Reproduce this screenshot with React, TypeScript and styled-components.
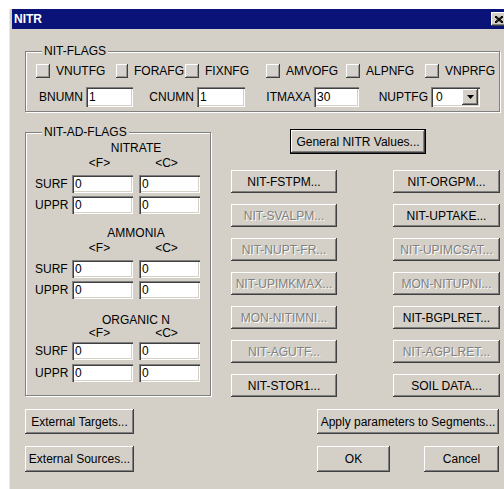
import React from 'react';
import styled, { createGlobalStyle } from 'styled-components';

const GlobalStyle = createGlobalStyle`
  html, body {
    margin: 0;
    padding: 0;
    background: #fff;
    overflow: hidden;
  }
  body {
    font-family: "Liberation Sans", Arial, sans-serif;
    font-size: 12px;
    color: #000;
  }
`;

const Screen = styled.div`
  width: 504px;
  height: 489px;
  padding: 9px 0 0 9px;
  box-sizing: border-box;
  overflow: hidden;
`;

const Window = styled.div`
  width: 503px;
  min-height: 480px;
  box-sizing: border-box;
  background: #d4d0c8;
  border-left: 1px solid #ecebe7;
  padding-left: 2px;
`;

const TitleBar = styled.div`
  height: 20px;
  display: flex;
  align-items: center;
  justify-content: space-between;
  padding: 0 5px 0 2px;
  background: #0a1478;
`;

const Title = styled.span`
  color: #fff;
  font-weight: bold;
  font-size: 12px;
  line-height: 14px;
`;

const CloseButton = styled.button`
  width: 16px;
  height: 14px;
  padding: 0;
  border: none;
  display: flex;
  align-items: center;
  justify-content: center;
  background: #d4d0c8;
  box-shadow: inset -1px -1px #404040, inset 1px 1px #fff, inset -2px -2px #808080;
`;

const Body = styled.div`
  width: 475px;
  padding: 15px 0 0 13px;
`;

const Group = styled.fieldset<{ $width?: number }>`
  margin: 0;
  min-width: 0;
  box-sizing: border-box;
  width: ${p => (p.$width ? `${p.$width}px` : 'auto')};
  border: 1px solid #808080;
  box-shadow: inset 1px 1px #fff, 1px 1px #fff;
`;

const FlagsGroup = styled(Group)`
  padding: 6px 0 4px 9px;
`;

const AdGroup = styled(Group)`
  padding: 2px 0 13px 9px;
`;

const GroupLabel = styled.legend`
  margin-left: 7px;
  padding: 0 2px;
  line-height: 14px;
  font-size: 12px;
  background: #d4d0c8;
`;

const CheckRow = styled.div`
  display: grid;
  grid-template-columns: 80px 69px 81px 80px 79px auto;
  height: 14px;
`;

const CheckItem = styled.label`
  display: flex;
  align-items: center;
  gap: 6px;
  line-height: 14px;
`;

const CheckBox = styled.span`
  width: 14px;
  height: 14px;
  margin-left: 1px;
  box-sizing: border-box;
  background: #d6d3ce;
  box-shadow: inset -1px -1px #404040, inset 1px 1px #fff, inset -2px -2px #9a9893;
`;

const FieldRow = styled.div`
  display: grid;
  grid-template-columns: 98px 112px 114px 121px;
  margin-top: 9px;
  height: 20px;
`;

const Field = styled.label`
  display: flex;
  align-items: center;
  justify-content: flex-end;
  gap: 3px;
`;

const TextBox = styled.input<{ $w: number; $h?: number }>`
  width: ${p => p.$w}px;
  height: ${p => p.$h ?? 18}px;
  box-sizing: border-box;
  margin: 0;
  padding: 0 3px;
  border: none;
  outline: none;
  background: #fff;
  font: 12px "Liberation Sans", Arial, sans-serif;
  color: #000;
  box-shadow: inset 1px 1px #808080, inset 2px 2px #404040, inset -1px -1px #fff, inset -2px -2px #d4d0c8;
`;

const ComboBox = styled.div`
  width: 49px;
  height: 20px;
  box-sizing: border-box;
  display: flex;
  align-items: center;
  justify-content: space-between;
  padding: 2px 2px 2px 5px;
  background: #fff;
  box-shadow: inset 1px 1px #808080, inset 2px 2px #404040, inset -1px -1px #fff, inset -2px -2px #d4d0c8;
`;

const ComboArrow = styled.span`
  width: 16px;
  height: 16px;
  display: flex;
  align-items: center;
  justify-content: center;
  background: #d4d0c8;
  box-shadow: inset -1px -1px #404040, inset 1px 1px #fff, inset -2px -2px #808080;
`;

const MidRow = styled.div`
  display: flex;
  align-items: flex-start;
  gap: 20px;
  margin-top: 13px;
`;

// the last block sits its heading closer to the <F>/<C> captions
const Section = styled.div<{ $tight?: boolean }>`
  display: grid;
  grid-template-columns: 31px 61px 61px;
  grid-template-rows: ${p => (p.$tight ? '12px 16px 22px 18px' : '15px 19px 21px 18px')};
  column-gap: 6px;
  margin-top: ${p => (p.$tight ? 15 : 12)}px;
  &:first-of-type {
    margin-top: 0;
  }
`;

const SectionTitle = styled.div<{ $tight?: boolean }>`
  grid-column: 2 / 4;
  text-align: center;
  line-height: ${p => (p.$tight ? 12 : 14)}px;
`;

const SubTitle = styled.div`
  text-align: center;
  line-height: 14px;
  padding-right: 6px;
`;

const RowLabel = styled.div`
  grid-column: 1;
  line-height: 18px;
`;

const RightPanel = styled.div`
  width: 269px;
  padding-top: 4px;
`;

const Button = styled.button<{ $w?: number; $h?: number; $default?: boolean }>`
  width: ${p => (p.$w ? `${p.$w}px` : '100%')};
  height: ${p => p.$h ?? 23}px;
  box-sizing: border-box;
  margin: 0;
  padding: 0 2px;
  white-space: nowrap;
  overflow: hidden;
  font: 12px "Liberation Sans", Arial, sans-serif;
  color: #000;
  background: #d4d0c8;
  border: ${p => (p.$default ? '1px solid #000' : 'none')};
  box-shadow: inset -1px -1px #404040, inset 1px 1px #fff, inset -2px -2px #808080;
  &:disabled {
    color: #808080;
    text-shadow: 1px 1px 0 #fff;
  }
`;

const GeneralWrap = styled.div`
  padding-left: 59px;
`;

const ButtonGrid = styled.div`
  display: grid;
  grid-template-columns: 106px 107px;
  grid-auto-rows: 23px;
  justify-content: space-between;
  row-gap: 11px;
  margin-top: 16px;
`;

const BottomRow = styled.div`
  display: flex;
  justify-content: space-between;
  margin-top: 12px;
  padding-right: 1px;
`;

const ButtonColumn = styled.div<{ $w: number }>`
  width: ${p => p.$w}px;
  display: flex;
  flex-direction: column;
  gap: 12px;
`;

const DialogActions = styled.div`
  display: flex;
  justify-content: space-between;
`;

type NitButton = { label: string; enabled: boolean };

const gridButtons: NitButton[][] = [
  [{ label: 'NIT-FSTPM...', enabled: true }, { label: 'NIT-ORGPM...', enabled: true }],
  [{ label: 'NIT-SVALPM...', enabled: false }, { label: 'NIT-UPTAKE...', enabled: true }],
  [{ label: 'NIT-NUPT-FR...', enabled: false }, { label: 'NIT-UPIMCSAT...', enabled: false }],
  [{ label: 'NIT-UPIMKMAX...', enabled: false }, { label: 'MON-NITUPNI...', enabled: false }],
  [{ label: 'MON-NITIMNI...', enabled: false }, { label: 'NIT-BGPLRET...', enabled: true }],
  [{ label: 'NIT-AGUTF...', enabled: false }, { label: 'NIT-AGPLRET...', enabled: false }],
  [{ label: 'NIT-STOR1...', enabled: true }, { label: 'SOIL DATA...', enabled: true }],
];

const flags = ['VNUTFG', 'FORAFG', 'FIXNFG', 'AMVOFG', 'ALPNFG', 'VNPRFG'];
const species = ['NITRATE', 'AMMONIA', 'ORGANIC N'];

function App(): JSX.Element {
  return (
    <Screen>
      <GlobalStyle />
      <Window>
        <TitleBar>
          <Title>NITR</Title>
          <CloseButton>
            <svg width="8" height="7" viewBox="0 0 8 7">
              <path d="M0 0 L8 7 M1 0 L8 6 M0 1 L7 7 M8 0 L0 7 M7 0 L0 6 M8 1 L1 7" stroke="#000" strokeWidth="1" />
            </svg>
          </CloseButton>
        </TitleBar>
        <Body>
          <FlagsGroup>
            <GroupLabel>NIT-FLAGS</GroupLabel>
            <CheckRow>
              {flags.map(f => (
                <CheckItem key={f}>
                  <CheckBox />
                  {f}
                </CheckItem>
              ))}
            </CheckRow>
            <FieldRow>
              <Field>
                BNUMN <TextBox $w={47} $h={20} defaultValue="1" />
              </Field>
              <Field>
                CNUMN <TextBox $w={48} $h={20} defaultValue="1" />
              </Field>
              <Field>
                ITMAXA <TextBox $w={45} $h={20} defaultValue="30" />
              </Field>
              <Field>
                NUPTFG
                <ComboBox>
                  0
                  <ComboArrow>
                    <svg width="7" height="4" viewBox="0 0 7 4">
                      <path d="M0 0 H7 L3.5 4 Z" fill="#000" />
                    </svg>
                  </ComboArrow>
                </ComboBox>
              </Field>
            </FieldRow>
          </FlagsGroup>

          <MidRow>
            <AdGroup $width={186}>
              <GroupLabel>NIT-AD-FLAGS</GroupLabel>
              {species.map((s, i) => {
                const tight = i === species.length - 1;
                return (
                  <Section key={s} $tight={tight}>
                    <SectionTitle $tight={tight}>{s}</SectionTitle>
                    <div />
                    <SubTitle>&lt;F&gt;</SubTitle>
                    <SubTitle>&lt;C&gt;</SubTitle>
                    <RowLabel>SURF</RowLabel>
                    <TextBox $w={61} defaultValue="0" />
                    <TextBox $w={61} defaultValue="0" />
                    <RowLabel>UPPR</RowLabel>
                    <TextBox $w={61} defaultValue="0" />
                    <TextBox $w={61} defaultValue="0" />
                  </Section>
                );
              })}
            </AdGroup>

            <RightPanel>
              <GeneralWrap>
                <Button $w={136} $h={25} $default>
                  General NITR Values...
                </Button>
              </GeneralWrap>
              <ButtonGrid>
                {gridButtons.flat().map(b => (
                  <Button key={b.label} disabled={!b.enabled}>
                    {b.label}
                  </Button>
                ))}
              </ButtonGrid>
            </RightPanel>
          </MidRow>

          <BottomRow>
            <ButtonColumn $w={109}>
              <Button $h={25}>External Targets...</Button>
              <Button $h={26}>External Sources...</Button>
            </ButtonColumn>
            <ButtonColumn $w={182}>
              <Button $h={25}>Apply parameters to Segments...</Button>
              <DialogActions>
                <Button $w={73} $h={26}>OK</Button>
                <Button $w={75} $h={26}>Cancel</Button>
              </DialogActions>
            </ButtonColumn>
          </BottomRow>
        </Body>
      </Window>
    </Screen>
  );
}

export default App;
